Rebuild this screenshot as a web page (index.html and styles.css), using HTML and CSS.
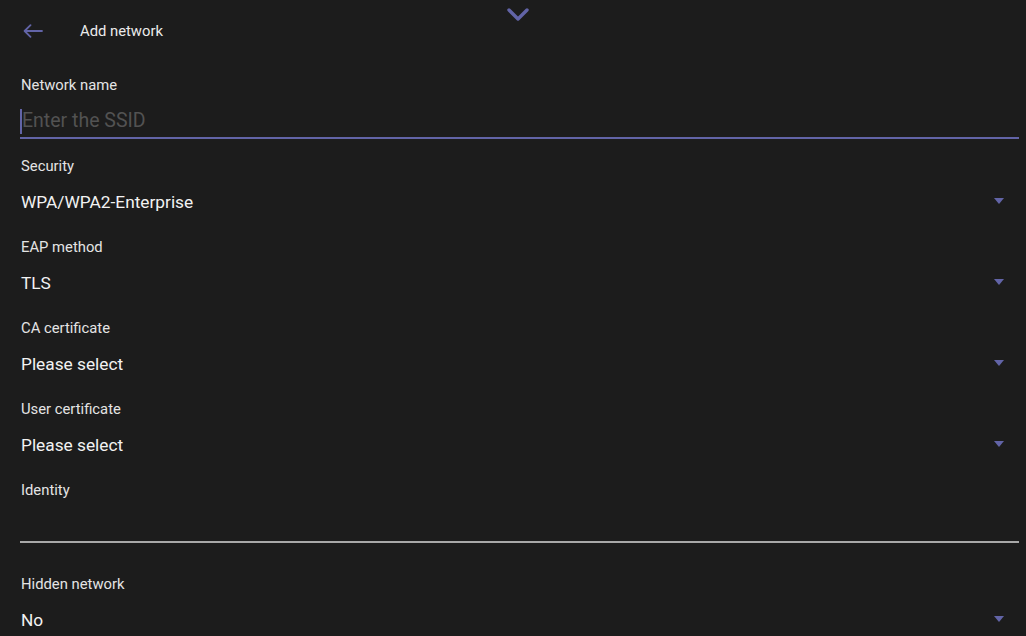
FILE: index.html
```html
<!DOCTYPE html>
<html>
<head>
<meta charset="utf-8">
<title>Add network</title>
<link rel="stylesheet" href="styles.css">
</head>
<body>
<div class="handle">
  <svg width="22" height="14" viewBox="0 0 22 14"><path d="M2 2 L11 11 L20 2" fill="none" stroke="#6264a7" stroke-width="3.4" stroke-linecap="round" stroke-linejoin="round"/></svg>
</div>
<header class="topbar">
  <span class="back">
    <svg width="20" height="14" viewBox="0 0 20 14"><path d="M19 7 H2 M7.5 1.2 L1.6 7 L7.5 12.8" fill="none" stroke="#6264a7" stroke-width="1.8" stroke-linecap="round" stroke-linejoin="round"/></svg>
  </span>
  <span class="title">Add network</span>
</header>
<form class="form">
  <div class="field field-input active">
    <label>Network name</label>
    <div class="input"><span class="caret"></span><span class="placeholder">Enter the SSID</span></div>
  </div>
  <div class="field">
    <label>Security</label>
    <div class="select">WPA/WPA2-Enterprise<span class="tri"></span></div>
  </div>
  <div class="field">
    <label>EAP method</label>
    <div class="select">TLS<span class="tri"></span></div>
  </div>
  <div class="field">
    <label>CA certificate</label>
    <div class="select">Please select<span class="tri"></span></div>
  </div>
  <div class="field">
    <label>User certificate</label>
    <div class="select">Please select<span class="tri"></span></div>
  </div>
  <div class="field field-input identity">
    <label>Identity</label>
    <div class="input"></div>
  </div>
  <div class="field">
    <label>Hidden network</label>
    <div class="select">No<span class="tri"></span></div>
  </div>
</form>
</body>
</html>
```

FILE: styles.css
```css
html, body {
    margin: 0;
    padding: 0;
    background-color: #1c1c1c;
    overflow: hidden;
}
body {
    font-family: Roboto, "Noto Sans", sans-serif;
    color: #ececec;
    width: 1026px;
    height: 636px;
    position: relative;
}
.handle {
    position: absolute;
    left: 507px;
    top: 8px;
    line-height: 0;
}
.topbar {
    height: 62px;
    display: flex;
    align-items: center;
}
.back {
    margin-left: 23px;
    width: 57px;
    line-height: 0;
}
.title {
    font-size: 14.8px;
    color: #ebebeb;
}
.form {
    margin: 8px 7px 0 20px;
}
.field label {
    display: block;
    height: 30px;
    line-height: 30px;
    font-size: 14.8px;
    color: #e4e4e4;
    padding-left: 1px;
}
.field {
    padding-bottom: 9px;
}
.select {
    height: 42px;
    line-height: 42px;
    font-size: 17.3px;
    color: #f2f2f2;
    padding-left: 1px;
    display: flex;
    justify-content: space-between;
    align-items: center;
}
.tri {
    width: 0;
    height: 0;
    border-left: 5.5px solid transparent;
    border-right: 5.5px solid transparent;
    border-top: 6px solid #6264a7;
    margin-right: 15px;
    margin-top: -2px;
}
.input {
    height: 33px;
    padding-top: 4px;
    line-height: 33px;
    font-size: 19.5px;
    border-bottom: 2px solid #a8a8a8;
    display: flex;
    align-items: center;
}
.active .input {
    border-bottom-color: #6264a7;
}
.field-input.active {
    padding-bottom: 12px;
}
.caret {
    width: 2px;
    height: 25px;
    background-color: #6264a7;
    margin-top: 1px;
}
.placeholder {
    color: #525252;
}
.identity .input {
    height: 36px;
    padding-top: 0;
}
.identity {
    padding-bottom: 26px;
}
```
